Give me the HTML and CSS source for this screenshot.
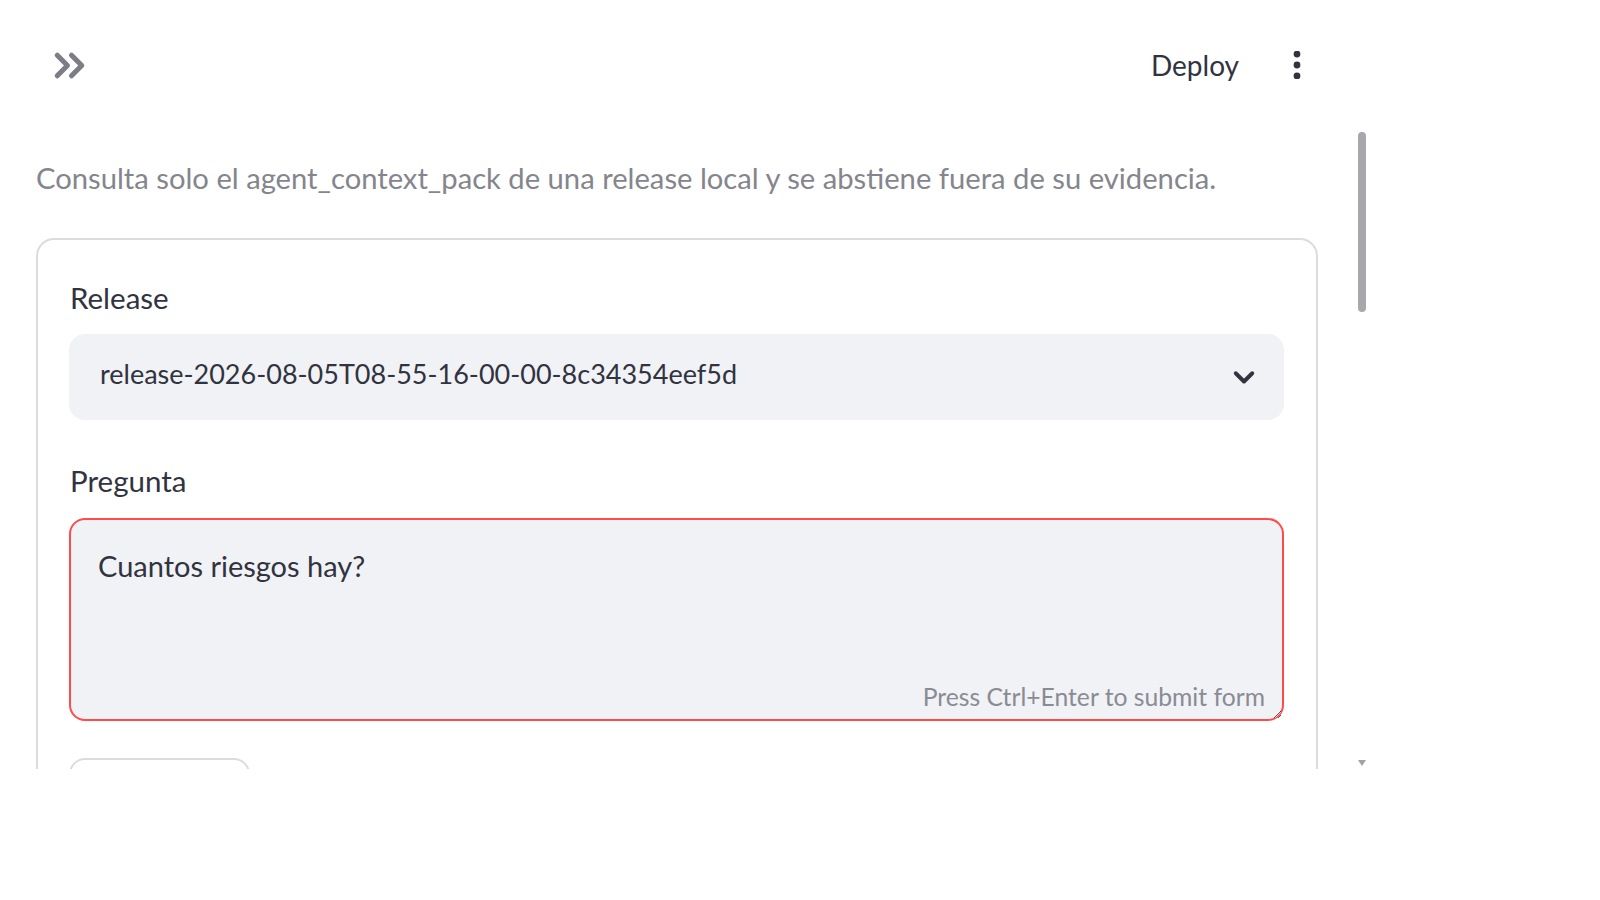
FILE: index.html
```html
<!DOCTYPE html>
<html lang="es">
<head>
    <meta charset="UTF-8">
    <meta name="viewport" content="width=device-width, initial-scale=1.0">
    <title>Agent context pack</title>
    <link rel="stylesheet" href="styles.css">
</head>
<body>

    <div class="app">
        <div class="main">
            <header class="topbar">
                <button class="icon-btn sidebar-toggle" aria-label="Open sidebar">
                    <svg viewBox="0 0 24 24" width="49" height="49"><path d="M6 7l5 5-5 5 M13 7l5 5-5 5"/></svg>
                </button>
                <div class="topbar-right">
                    <span class="deploy">Deploy</span>
                    <button class="icon-btn menu-btn" aria-label="Main menu">
                        <svg viewBox="0 0 28 28" width="28" height="28">
                            <circle cx="14" cy="3" r="3.4"/>
                            <circle cx="14" cy="14" r="3.4"/>
                            <circle cx="14" cy="25" r="3.4"/>
                        </svg>
                    </button>
                </div>
            </header>

            <div class="content">
                <p class="caption">Consulta solo el agent_context_pack de una release local y se abstiene fuera de su evidencia.</p>

                <form class="form-box">
                    <label class="field-label">Release</label>
                    <div class="select">
                        <span class="select-value">release-2026-08-05T08-55-16-00-00-8c34354eef5d</span>
                        <svg class="select-arrow" viewBox="0 0 24 24" width="36" height="36"><path d="M6.5 9.5l5.5 5.5 5.5-5.5" /></svg>
                    </div>

                    <label class="field-label" for="pregunta">Pregunta</label>
                    <div class="textarea-wrap">
                        <textarea id="pregunta" class="textarea">Cuantos riesgos hay?</textarea>
                        <span class="hint">Press Ctrl+Enter to submit form</span>
                    </div>

                    <!-- submit button, its label sits below the visible area -->
                    <button type="button" class="submit-btn" aria-label="Preguntar"></button>
                </form>
            </div>
        </div>

        <div class="scrollbar">
            <div class="thumb"></div>
            <div class="arrow-down"></div>
        </div>
    </div>

</body>
</html>
```

FILE: styles.css
```css
body {
    margin: 0;
    background-color: #ffffff;
    font-family: Lato, "Noto Sans", sans-serif;
    color: #31333f;
}
.app {
    display: flex;
    width: 1370px;
    height: 769px;
    overflow: hidden;
}
.main {
    width: 1353px;
    flex-shrink: 0;
}
.topbar {
    height: 130px;
    display: flex;
    align-items: center;
    padding: 0 42px 0 45px;
}
.icon-btn {
    background: none;
    border: none;
    padding: 0;
    display: flex;
    cursor: pointer;
}
.sidebar-toggle svg {
    fill: none;
    stroke: #7c7d86;
    stroke-width: 2.5;
    stroke-linecap: round;
    stroke-linejoin: round;
}
.topbar-right {
    margin-left: auto;
    display: flex;
    align-items: center;
    gap: 44px;
}
.deploy {
    font-size: 28px;
    line-height: 40px;
}
.menu-btn svg {
    fill: #31333f;
}
.content {
    padding: 0 35px 0 36px;
}
.caption {
    margin: 25px 0 37px;
    font-size: 29.2px;
    line-height: 46px;
    color: #84858d;
}
.form-box {
    border: 2px solid #dcdcdf;
    border-radius: 18px;
    padding: 40px 32px 40px 31px;
    display: flex;
    flex-direction: column;
}
.field-label {
    font-size: 29.5px;
    line-height: 36px;
    margin-bottom: 18px;
    padding-left: 1px;
}
.select {
    height: 86px;
    box-sizing: border-box;
    background-color: #f0f2f6;
    border-radius: 16px;
    display: flex;
    align-items: center;
    padding: 0 22px 8px 31px;
    margin-bottom: 43px;
}
.select-value {
    font-size: 27px;
}
.select-arrow {
    margin-left: auto;
    margin-top: 8px;
    fill: none;
    stroke: #31333f;
    stroke-width: 2.6;
    stroke-linecap: round;
    stroke-linejoin: round;
}
.textarea-wrap {
    position: relative;
    margin-top: 1px;
}
.textarea {
    display: block;
    width: 100%;
    box-sizing: border-box;
    height: 203px;
    border: 2px solid #ff4b4b;
    border-radius: 16px;
    background-color: #f0f2f6;
    padding: 26px 27px;
    font-family: inherit;
    font-size: 29px;
    line-height: 40px;
    color: #31333f;
    resize: vertical;
    outline: none;
}
.hint {
    position: absolute;
    right: 19px;
    bottom: 10px;
    font-size: 24.7px;
    color: #8a8b93;
}
.submit-btn {
    align-self: flex-start;
    margin-top: 37px;
    width: 181px;
    height: 80px;
    border: 2px solid #dcdcdf;
    border-radius: 16px;
    background: #ffffff;
}
.scrollbar {
    width: 17px;
    display: flex;
    flex-direction: column;
    align-items: center;
    padding-bottom: 3px;
    box-sizing: border-box;
}
.thumb {
    margin-top: 132px;
    width: 8px;
    height: 180px;
    border-radius: 4px;
    background-color: #a8a8ac;
}
.arrow-down {
    margin-top: auto;
    width: 0;
    height: 0;
    border-left: 4px solid transparent;
    border-right: 4px solid transparent;
    border-top: 6px solid #a3a3a3;
}
```
